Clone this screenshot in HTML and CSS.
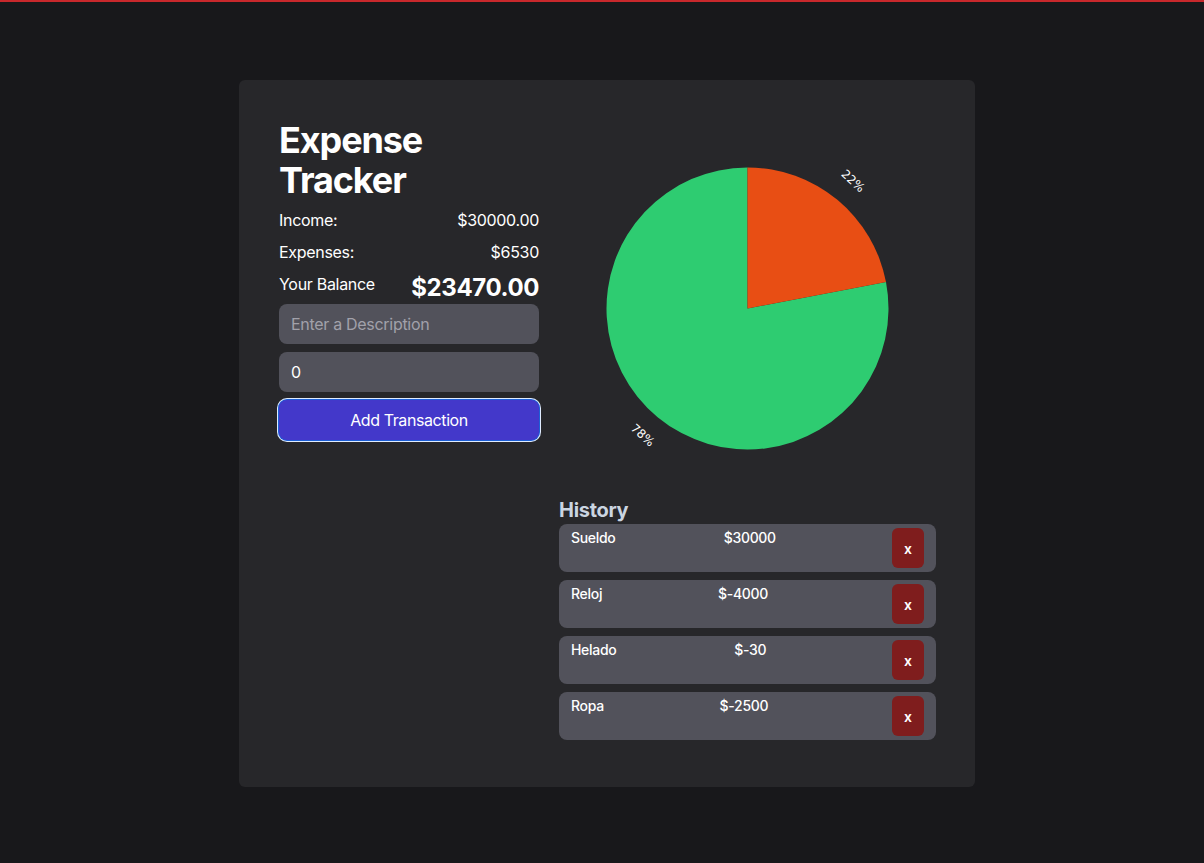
FILE: index.html
```html
<!DOCTYPE html>
<html lang="en">
<head>
<meta charset="utf-8">
<title>Expense Tracker</title>
<link rel="stylesheet" href="styles.css">
</head>
<body>
<div class="topline"></div>
<main class="card">
  <section class="left">
    <h1 class="title">Expense Tracker</h1>
    <div class="row"><span>Income:</span><span>$30000.00</span></div>
    <div class="row"><span>Expenses:</span><span>$6530</span></div>
    <div class="row balance"><span>Your Balance</span><span class="big">$23470.00</span></div>
    <input class="field" type="text" placeholder="Enter a Description">
    <input class="field" type="text" value="0">
    <button class="add">Add Transaction</button>
  </section>
  <section class="right">
    <svg class="chart" width="377" height="377" viewBox="0 0 377 377">
      <path d="M188.5 188.5 L327.0 162.08 A141 141 0 1 1 188.5 47.5 Z" fill="#2ecc71"/>
      <path d="M188.5 188.5 L188.5 47.5 A141 141 0 0 1 327.0 162.08 Z" fill="#e84e14"/>
      <text x="293.7" y="61.4" class="lbl" transform="rotate(42 293.7 61.4)">22%</text>
      <text x="83.3" y="315.6" class="lbl" transform="rotate(42 83.3 315.6)">78%</text>
    </svg>
    <h2 class="hist">History</h2>
    <ul class="list">
      <li class="item"><span class="name">Sueldo</span><span class="amt">$30000</span><button class="del">x</button></li>
      <li class="item"><span class="name">Reloj</span><span class="amt">$-4000</span><button class="del">x</button></li>
      <li class="item"><span class="name">Helado</span><span class="amt">$-30</span><button class="del">x</button></li>
      <li class="item"><span class="name">Ropa</span><span class="amt">$-2500</span><button class="del">x</button></li>
    </ul>
  </section>
</main>
</body>
</html>
```
FILE: styles.css
```css
html, body {
  margin: 0;
  padding: 0;
  background: #18181b;
  font-family: Inter, "Liberation Sans", sans-serif;
  color: #ffffff;
}
.topline {
  height: 2px;
  background: #c8282c;
}
.card {
  margin: 78px 0 0 239px;
  width: 736px;
  box-sizing: border-box;
  padding: 40px 40px 39px 40px;
  background: #27272a;
  border-radius: 6px;
  display: flex;
  gap: 20px;
  align-items: flex-start;
}
.left {
  width: 260px;
  display: flex;
  flex-direction: column;
}
.title {
  margin: 0;
  font-size: 36px;
  line-height: 40px;
  font-weight: 700;
  letter-spacing: -1.1px;
}
.row {
  margin-top: 8px;
  display: flex;
  justify-content: space-between;
  align-items: flex-start;
  font-size: 16px;
  line-height: 24px;
  letter-spacing: -0.3px;
}
.big {
  font-size: 24px;
  line-height: 32px;
  font-weight: 700;
  letter-spacing: -0.4px;
}
.field {
  height: 40px;
  box-sizing: border-box;
  border: none;
  border-radius: 8px;
  background: #52525b;
  color: #ffffff;
  font-family: inherit;
  font-size: 16px;
  letter-spacing: -0.3px;
  padding: 0 12px;
  margin-bottom: 8px;
  outline: none;
}
.field::placeholder {
  color: #a1a1aa;
}
.add {
  height: 40px;
  border: none;
  border-radius: 8px;
  background: #4338ca;
  color: #ffffff;
  font-family: inherit;
  font-size: 16px;
  letter-spacing: -0.4px;
  box-shadow: 0 0 0 1px #1d5fd6, 0 0 0 2px #e0ecff;
}
.right {
  width: 377px;
  display: flex;
  flex-direction: column;
}
.chart {
  display: block;
}
.lbl {
  fill: #ffffff;
  font-size: 12px;
  font-family: "DejaVu Sans", sans-serif;
  text-anchor: middle;
  dominant-baseline: middle;
}
.hist {
  margin: 0;
  font-size: 20px;
  line-height: 27px;
  font-weight: 700;
  letter-spacing: -0.3px;
  color: #cbd5e1;
}
.list {
  list-style: none;
  margin: 0;
  padding: 0;
}
.item {
  height: 48px;
  box-sizing: border-box;
  margin-bottom: 8px;
  padding: 4px 12px;
  background: #52525b;
  border-radius: 8px;
  display: flex;
  justify-content: space-between;
  align-items: flex-start;
  font-size: 14px;
  line-height: 20px;
  font-weight: 500;
  letter-spacing: -0.3px;
}
.amt {
  margin-right: 8px;
}
.del {
  width: 32px;
  height: 40px;
  border: none;
  border-radius: 6px;
  background: #7f1d1d;
  color: #ffffff;
  font-family: inherit;
  font-size: 14px;
  font-weight: 600;
  padding: 0;
}
```
